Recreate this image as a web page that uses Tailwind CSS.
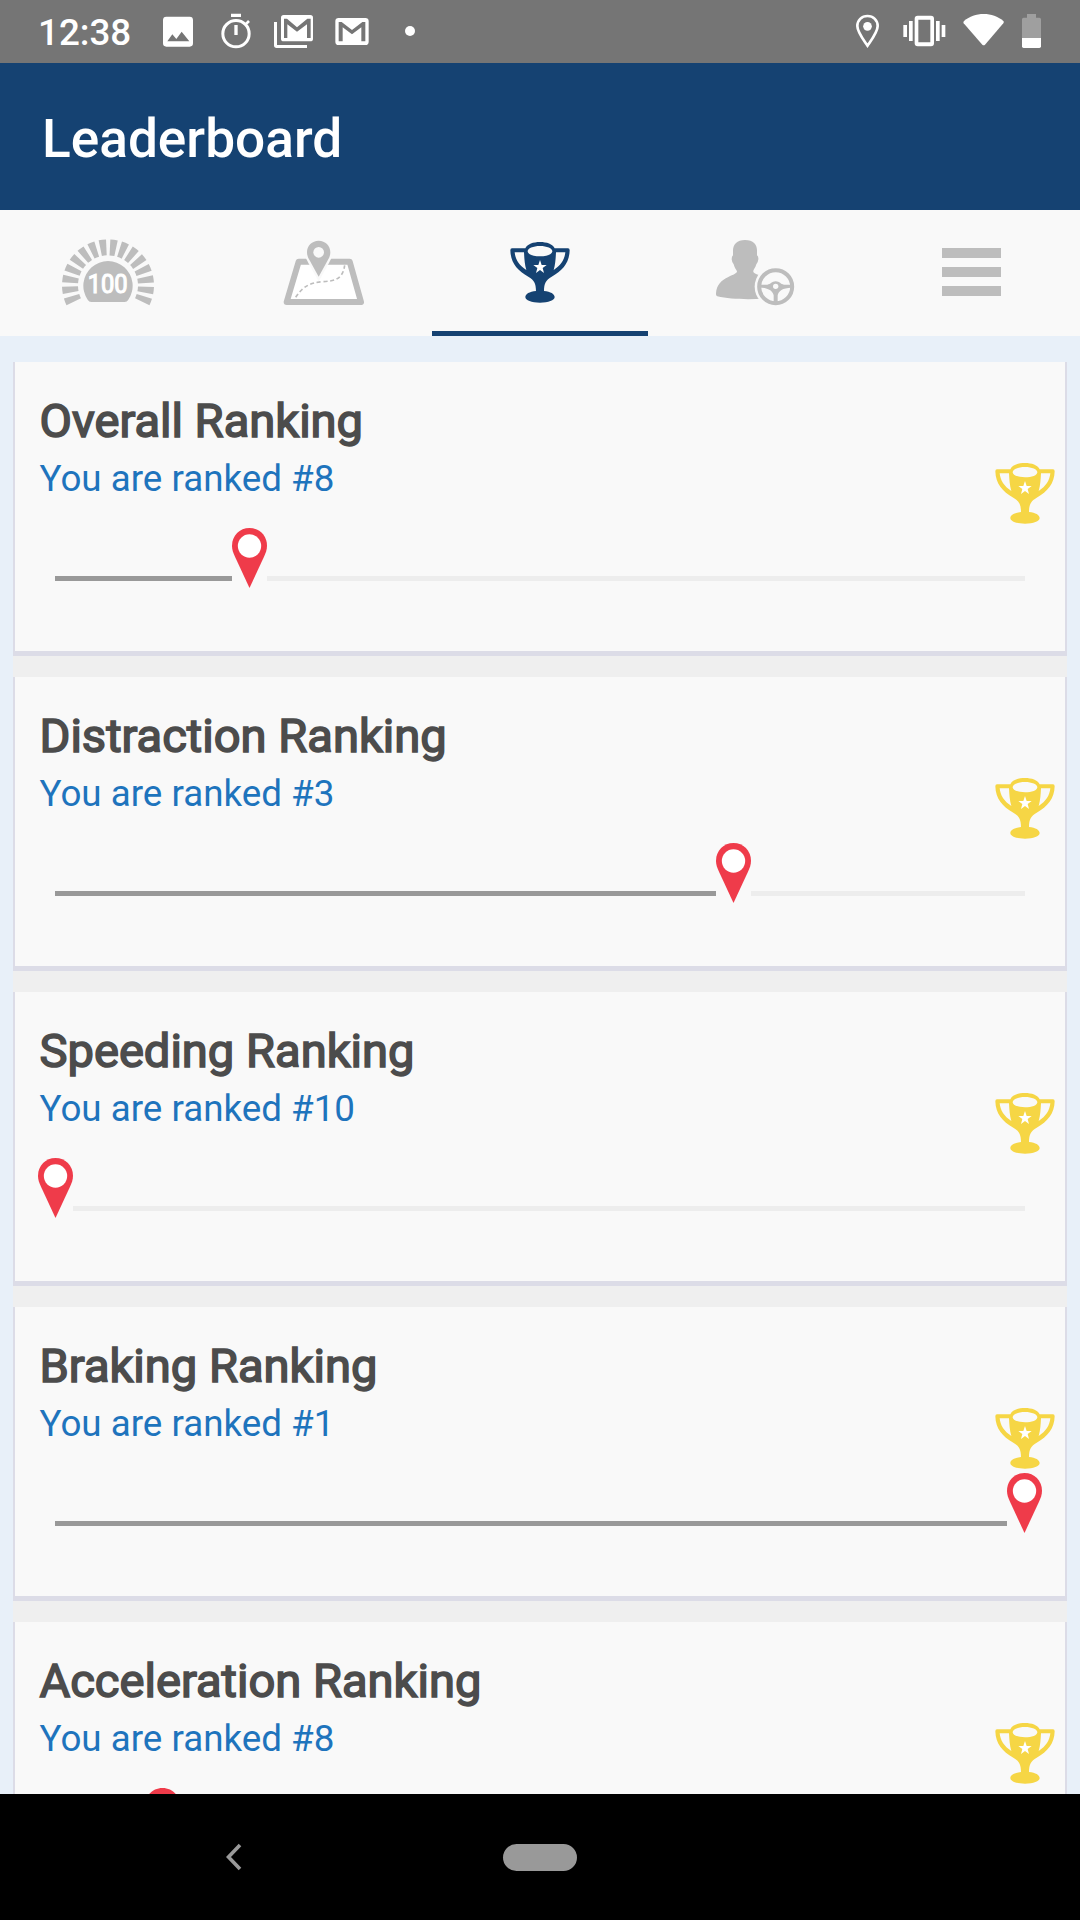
<!DOCTYPE html>
<html lang="en">
<head>
    <meta charset="UTF-8">
    <meta name="viewport" content="width=device-width, initial-scale=1.0">
    <title>Leaderboard</title>
    <script src="https://cdn.jsdelivr.net/npm/@tailwindcss/browser@4"></script>
</head>
<body class="bg-black font-['Roboto',sans-serif]">

    <!-- Shared icons -->
    <svg class="hidden">
        <symbol id="trophy" viewBox="0 0 180 183">
            <path fill="currentColor" fill-rule="evenodd" d="M6 19H46C52 6 70 0 90 0S128 6 134 19H174Q179 19 179 25C178 62 158 86 125 104C108 114 102 124 102 147C122 149 134 156 134 165C134 175 115 182 90 182S46 175 46 165C46 156 58 149 78 147C78 124 72 114 55 104C22 86 2 62 1 25Q1 19 6 19ZM14 31C16 52 27 70 49 84C44 68 43 50 42 31ZM166 31C164 52 153 70 131 84C136 68 137 50 138 31ZM90 12C69 12 53 19 53 28S69 43 90 43S127 37 127 28S111 12 90 12Z"/>
            <path fill="#fff" d="M90 54L95 69L110 69L98 78L102 93L90 84L78 93L82 78L70 69L85 69Z"/>
        </symbol>
        <symbol id="pin" viewBox="0 0 105 180">
            <path fill="#ef3b4a" d="M52.500 0C82 0 105 23 105 53C105 65 101 75 96 86L52.500 180L9 86C4 75 0 65 0 53C0 23 23 0 52.500 0Z"/>
            <circle cx="52.500" cy="54" r="35" fill="#fff"/>
        </symbol>
    </svg>

    <div class="flex h-[1920px] w-[1080px] flex-col overflow-hidden">

        <!-- Status bar -->
        <div class="flex h-[63px] shrink-0 items-start bg-[#757575] pt-[13px] pl-[38px] pr-[39px] text-white">
            <span class="w-[125px] pt-px text-[36.75px] font-medium leading-[38px]">12:38</span>
            <svg class="h-9 w-[30px]" viewBox="489 39 90 108" fill="currentColor">
                <path fill-rule="evenodd" d="M499 50H569Q579 50 579 60V130Q579 140 569 140H499Q489 140 489 130V60Q489 50 499 50ZM502 124H568L545 95L529 117L517 103Z"/>
            </svg>
            <svg class="ml-7 h-9 w-[30px]" viewBox="663 39 90 108" fill="none" stroke="currentColor">
                <circle cx="708" cy="101" r="39.500" stroke-width="9"/>
                <path stroke-width="10" d="M693 46H723M708 75V105"/>
                <path stroke-width="8" d="M736 74L747 63"/>
            </svg>
            <svg class="ml-[23px] h-9 w-[39px]" viewBox="822 39 117 108" fill="currentColor">
                <path fill-rule="evenodd" d="M851 45H931Q939 45 939 53V116Q939 124 931 124H851Q843 124 843 116V53Q843 45 851 45ZM852 56V114H862V73L891 95L921 73V114H932V56H922L891 82L861 56Z"/>
                <path d="M822 66H831V135H921V144H830Q822 144 822 136Z"/>
            </svg>
            <svg class="ml-[22px] h-9 w-[34px]" viewBox="1005 39 102 108" fill="currentColor">
                <path fill-rule="evenodd" d="M1016 54H1096Q1106 54 1106 64V125Q1106 135 1096 135H1016Q1006 135 1006 125V64Q1006 54 1016 54ZM1016 66V124H1028V82L1056 103L1084 82V124H1096V66H1087L1056 90L1025 66Z"/>
            </svg>
            <div class="mt-[13px] ml-9 size-2.5 rounded-full bg-white"></div>

            <svg class="ml-auto h-9 w-[25px]" viewBox="105 39 75 108" fill="none" stroke="currentColor">
                <path stroke-width="8" d="M142.500 48C160 48 173 61 173 78C173 96 157 116 142.500 137C128 116 112 96 112 78C112 61 125 48 142.500 48Z"/>
                <circle cx="142.500" cy="79" r="13" fill="currentColor" stroke="none"/>
            </svg>
            <svg class="ml-[23px] h-9 w-[43px]" viewBox="248 39 129 108" fill="currentColor">
                <path fill-rule="evenodd" d="M292 47H332Q341 47 341 56V130Q341 139 332 139H292Q283 139 283 130V56Q283 47 292 47ZM294 59V127H330V59Z"/>
                <path d="M249 75H260V111H249ZM266 63H277V123H266ZM347 63H358V123H347ZM364 75H375V111H364Z"/>
            </svg>
            <svg class="ml-[17px] h-9 w-[41px]" viewBox="429 39 123 108" fill="currentColor">
                <path d="M432 63C449 49 468 42 491 42S533 49 550 63Q553 66 550 70L495 134Q491 138 487 134L431 70Q429 66 432 63Z"/>
            </svg>
            <svg class="ml-[18px] h-9 w-[19px]" viewBox="606 39 57 108">
                <path fill="#9f9f9f" d="M621 42H648V53H658Q663 53 663 58V114H606V58Q606 53 611 53H621Z"/>
                <path fill="#fff" d="M606 114H663V139Q663 144 658 144H611Q606 144 606 139Z"/>
            </svg>
        </div>

        <!-- App bar -->
        <header class="flex h-[147px] shrink-0 items-center bg-[#154272] pt-[5px] pl-[42px]">
            <h1 class="text-[53.2px] font-medium leading-[62px] text-white">Leaderboard</h1>
        </header>

        <!-- Tabs -->
        <nav class="grid h-[126px] shrink-0 grid-cols-5 bg-[#f9f9f9] text-[#bdbdbd]">
            <a class="flex justify-center pt-[29px]">
                <svg class="h-[67px] w-24" viewBox="60 57 288 201">
                    <path fill="none" stroke="currentColor" stroke-width="48" pathLength="231.2" stroke-dasharray="9.2 5.6" d="M101.200 245.300A114 114 0 1 1 306.800 245.300"/>
                    <path fill="currentColor" d="M154 246Q147 246 143 239A74 74 0 1 1 265 239Q261 246 254 246Z"/>
                    <text x="143" y="220" textLength="120" lengthAdjust="spacingAndGlyphs" font-family="Roboto, sans-serif" font-size="78" fill="#fff" stroke="#fff" stroke-width="3.5">100</text>
                </svg>
            </a>
            <a class="flex justify-center pt-[29px]">
                <svg class="h-[67px] w-[84px]" viewBox="726 57 252 201">
                    <path fill="#fff" stroke="currentColor" stroke-width="18" stroke-linejoin="round" d="M776 125H929L963 246H740Z"/>
                    <path fill="none" stroke="currentColor" stroke-width="5" stroke-dasharray="12 8" d="M767 232C785 205 804 188 848 185C885 183 908 178 914 136"/>
                    <path fill="currentColor" stroke="#f9f9f9" stroke-width="14" paint-order="stroke" d="M836 62C856 62 871 77 871 97C871 107 867 115 862 123L836 170L810 123C805 115 801 107 801 97C801 77 816 62 836 62Z"/>
                    <circle cx="836" cy="97" r="16" fill="#f9f9f9"/>
                </svg>
            </a>
            <a class="flex justify-center border-b-[5px] border-[#154272] pt-8 pr-px text-[#154272]">
                <svg class="h-[61px] w-[60px]"><use href="#trophy"/></svg>
            </a>
            <a class="flex justify-center pt-[29px]">
                <svg class="h-[67px] w-[82px]" viewBox="855 57 246 201">
                    <path fill="currentColor" d="M945 60C970 60 981 73 981 91V106Q986 109 985 118Q984 128 979 133C976 143 972 147 970 152C968 158 976 162 990 166L1010 235C960 240 900 238 862 229Q857 227 858 220C860 194 874 181 895 171C910 164 921 160 921 154C918 148 913 142 911 133Q906 128 905 118Q905 109 909 106V91C909 73 921 60 945 60Z"/>
                    <circle cx="1037" cy="200" r="63" fill="#f9f9f9"/>
                    <circle cx="1037" cy="200" r="49.500" fill="none" stroke="currentColor" stroke-width="12"/>
                    <path fill="currentColor" d="M990 194H1012C1022 193 1025 184 1037 184S1052 193 1062 194H1084V203C1058 203 1045 214 1043 226V248H1031V226C1029 214 1016 203 990 203Z"/>
                    <circle cx="1037" cy="199" r="8" fill="#f9f9f9"/>
                </svg>
            </a>
            <a class="flex flex-col items-center gap-[9.5px] pt-[38px] pr-px">
                <span class="h-[9.7px] w-[59px] bg-[#bdbdbd]"></span>
                <span class="h-[9.7px] w-[59px] bg-[#bdbdbd]"></span>
                <span class="h-[9.7px] w-[59px] bg-[#bdbdbd]"></span>
            </a>
        </nav>

        <!-- Rankings -->
        <main class="min-h-0 flex-1 overflow-hidden bg-[#e8f0f9] px-[13px] pt-[26px]">
            <div id="rankings" class="flex flex-col gap-[21px] bg-[#efefef]"></div>
        </main>

        <!-- System navigation -->
        <div class="grid h-[126px] shrink-0 grid-cols-[466px_148px_1fr] items-center bg-black">
            <svg class="ml-[225px] h-7 w-[18px]" viewBox="0 0 18 28" fill="none" stroke="#999" stroke-width="3.6">
                <path d="M15 2L3.500 14L15 26"/>
            </svg>
            <div class="h-[27px] w-[74px] justify-self-center rounded-full bg-[#999]"></div>
        </div>
    </div>

    <script>
        const rankings = [
            { name: 'Overall', rank: 8, progress: 0.2 },
            { name: 'Distraction', rank: 3, progress: 0.7 },
            { name: 'Speeding', rank: 10, progress: 0 },
            { name: 'Braking', rank: 1, progress: 1 },
            { name: 'Acceleration', rank: 8, progress: 0.11 },
        ];
        const TRACK_WIDTH = 969;

        document.getElementById('rankings').innerHTML = rankings.map(item => `
            <section class="h-[294px] border-x-2 border-b-[5px] border-[#dcdce7] bg-[#f9f9f9]">
                <div class="flex h-[166px] justify-between pt-[31px] pr-[10.5px] pl-[24.5px]">
                    <div>
                        <h2 class="text-[47.1px] leading-[56px] text-[#4c4c4c] [-webkit-text-stroke:1.6px_#4c4c4c]">${item.name} Ranking</h2>
                        <p class="mt-[7.5px] text-[36.75px] leading-[43px] text-[#1e74bd]">You are ranked #${item.rank}</p>
                    </div>
                    <svg class="mt-[69.5px] h-[61px] w-[60px] shrink-0 text-[#f6d645]"><use href="#trophy"/></svg>
                </div>
                <div class="ml-[23px] flex h-[60px] w-[1005px]">
                    <div class="shrink-0 overflow-hidden" style="width: ${Math.round(item.progress * TRACK_WIDTH)}px">
                        <div class="mt-12 ml-[17px] h-[5px] bg-[#999]"></div>
                    </div>
                    <svg class="h-[60px] w-[35px] shrink-0"><use href="#pin"/></svg>
                    <div class="flex-1 overflow-hidden">
                        <div class="mt-12 mr-[18px] h-[5px] bg-[#ededed]"></div>
                    </div>
                </div>
            </section>
        `).join('');
    </script>
</body>
</html>
